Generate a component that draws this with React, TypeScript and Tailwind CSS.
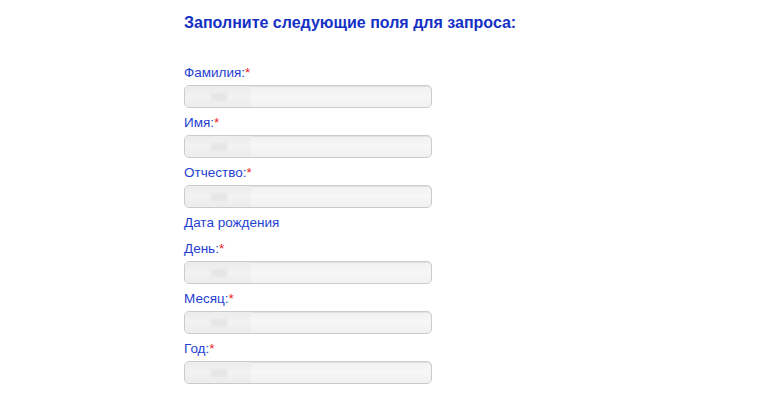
import React from "react";

const Req = () => <span className="text-[#ee1c25]">*</span>;

function Field({ label, last }: { label: string; last?: boolean }) {
  return (
    <div className={last ? "" : "pb-[7px]"}>
      <div className="h-[15px] text-[13.5px] leading-[15px] text-[#1f3fd2]">
        {label}:<Req />
      </div>
      <div className="mt-[5px] flex h-[23px] w-[248px] items-center overflow-hidden rounded-[5px] border border-[#cbcbcb] bg-gradient-to-b from-[#f1f1f1] via-[#f7f7f7] to-[#f1f1f1] shadow-[inset_0_1px_1px_rgba(0,0,0,0.07)]">
        <div className="flex h-full w-[66px] items-center bg-gradient-to-b from-[#ececec] via-[#f2f2f2] to-[#ececec] pl-[26px]">
          <div className="h-[8px] w-[16px] bg-[#e6e6e6] blur-[1px]" />
        </div>
      </div>
    </div>
  );
}

export default function App() {
  return (
    <div
      className="h-[393px] w-[775px] overflow-hidden bg-white pl-[184px] pt-[14px]"
      style={{ fontFamily: '"Liberation Sans", Arial, sans-serif' }}
    >
      <h1 className="text-[16px] font-bold leading-[18px] text-[#1530c4]">
        Заполните следующие поля для запроса:
      </h1>
      <div className="mt-[33px]">
        <Field label="Фамилия" />
        <Field label="Имя" />
        <Field label="Отчество" />
        <div className="h-[26px] text-[13.5px] leading-[15px] text-[#1f3fd2]">Дата рождения</div>
        <Field label="День" />
        <Field label="Месяц" />
        <Field label="Год" last />
      </div>
    </div>
  );
}
